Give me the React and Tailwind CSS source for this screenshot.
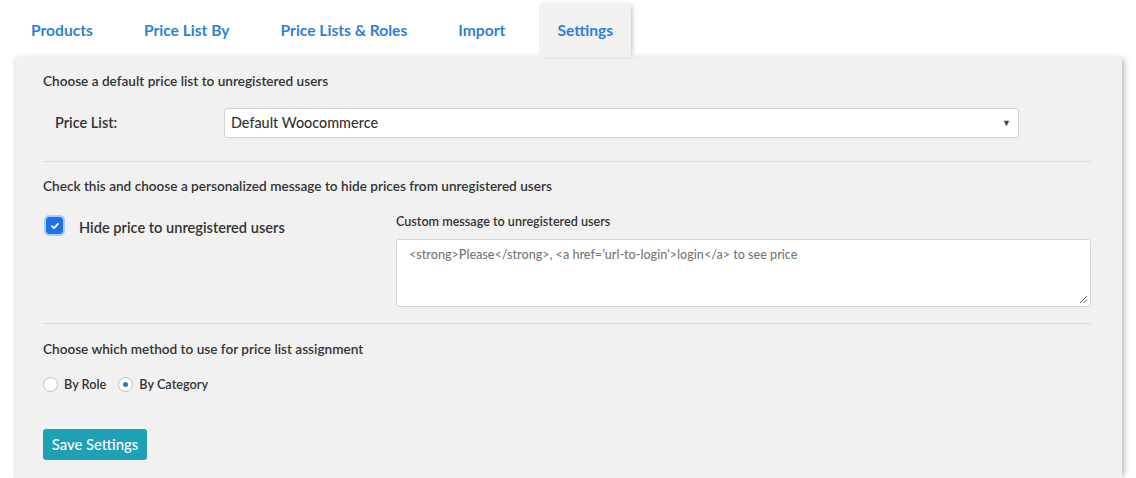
import React from "react";

export default function App() {
  const font = { fontFamily: "Lato, 'Open Sans', sans-serif" };
  return (
    <div className="w-[1136px] h-[478px] bg-white overflow-hidden" style={font}>
      <div className="flex h-[57px] items-stretch pl-[31px] pt-[3px]">
        <div className="flex items-center gap-[51px] pt-[2px] text-[15.6px] font-bold text-[#2f7fd6]">
          <span>Products</span>
          <span>Price List By</span>
          <span>Price Lists &amp; Roles</span>
          <span>Import</span>
        </div>
        <div className="ml-[34px] w-[92px] bg-[#f1f1f1] rounded-t-[4px] flex items-center justify-center text-[15.6px] font-bold text-[#2f7fd6] shadow-[3px_0_5px_-2px_rgba(0,0,0,0.25)] pt-[1px]">
          Settings
        </div>
      </div>
      <div className="ml-[13px] w-[1109px] h-[421px] bg-[#f1f1f1] shadow-[4px_0_6px_-2px_rgba(0,0,0,0.3)] px-[30px] text-[#333]">
        <div className="w-[1048px]">
          <div className="pt-[15px] text-[13.6px] font-semibold leading-[18px]">Choose a default price list to unregistered users</div>
          <div className="flex items-center mt-[18px]">
            <div className="w-[181px] pl-[12px] text-[14.5px] font-semibold">Price List:</div>
            <div className="w-[795px] h-[30px] bg-white border border-[#d4d4d4] rounded-[3px] flex items-center justify-between pl-[6px] pr-[7px] text-[14.4px] font-medium text-[#333]">
              <span>Default Woocommerce</span>
              <span className="text-[9px] text-[#444]">▼</span>
            </div>
          </div>
          <div className="mt-[23px] border-t border-[#dcdcdc]"></div>
          <div className="mt-[15px] text-[13.6px] font-semibold leading-[18px]">Check this and choose a personalized message to hide prices from unregistered users</div>
          <div className="flex mt-[19px]">
            <div className="w-[353px] flex items-start pt-[1px]">
              <div className="ml-[1px] w-[21px] h-[21px] rounded-[5px] bg-[#a9cdf5] flex items-center justify-center">
                <div className="w-[17px] h-[17px] rounded-[4px] bg-[#1a73e8] flex items-center justify-center">
                  <svg width="10" height="10" viewBox="0 0 10 10"><path d="M2 5.2 L4 7.2 L8 2.8" stroke="white" strokeWidth="1.8" fill="none" strokeLinecap="round" strokeLinejoin="round" /></svg>
                </div>
              </div>
              <span className="ml-[14px] mt-[3px] text-[14.6px] font-semibold leading-[20px]">Hide price to unregistered users</span>
            </div>
            <div className="flex-1">
              <div className="text-[12.6px] font-semibold leading-[16px]">Custom message to unregistered users</div>
              <div className="relative mt-[9px] h-[68px] bg-white border border-[#d4d4d4] rounded-[3px] px-[12px] pt-[6px] text-[12.6px] text-[#777] font-medium">
                &lt;strong&gt;Please&lt;/strong&gt;, &lt;a href='url-to-login'&gt;login&lt;/a&gt; to see price
                <svg className="absolute right-[2px] bottom-[2px]" width="9" height="9" viewBox="0 0 9 9"><path d="M8 1 L1 8 M8 4.5 L4.5 8" stroke="#666" strokeWidth="1" /></svg>
              </div>
            </div>
          </div>
          <div className="mt-[16px] border-t border-[#dcdcdc]"></div>
          <div className="mt-[16px] text-[13.6px] font-semibold leading-[18px]">Choose which method to use for price list assignment</div>
          <div className="flex items-center mt-[17px] text-[12.7px] font-semibold">
            <span className="w-[15px] h-[15px] rounded-full bg-white border border-[#bdbdbd]"></span>
            <span className="ml-[6px]">By Role</span>
            <span className="ml-[12px] w-[15px] h-[15px] rounded-full bg-white border border-[#bdbdbd] flex items-center justify-center">
              <span className="w-[5px] h-[5px] rounded-full bg-[#2a7bbf]"></span>
            </span>
            <span className="ml-[6px]">By Category</span>
          </div>
          <button className="mt-[35px] w-[104px] h-[31px] bg-[#1ea0b5] rounded-[3px] text-white text-[14.8px] font-medium">Save Settings</button>
        </div>
      </div>
    </div>
  );
}
